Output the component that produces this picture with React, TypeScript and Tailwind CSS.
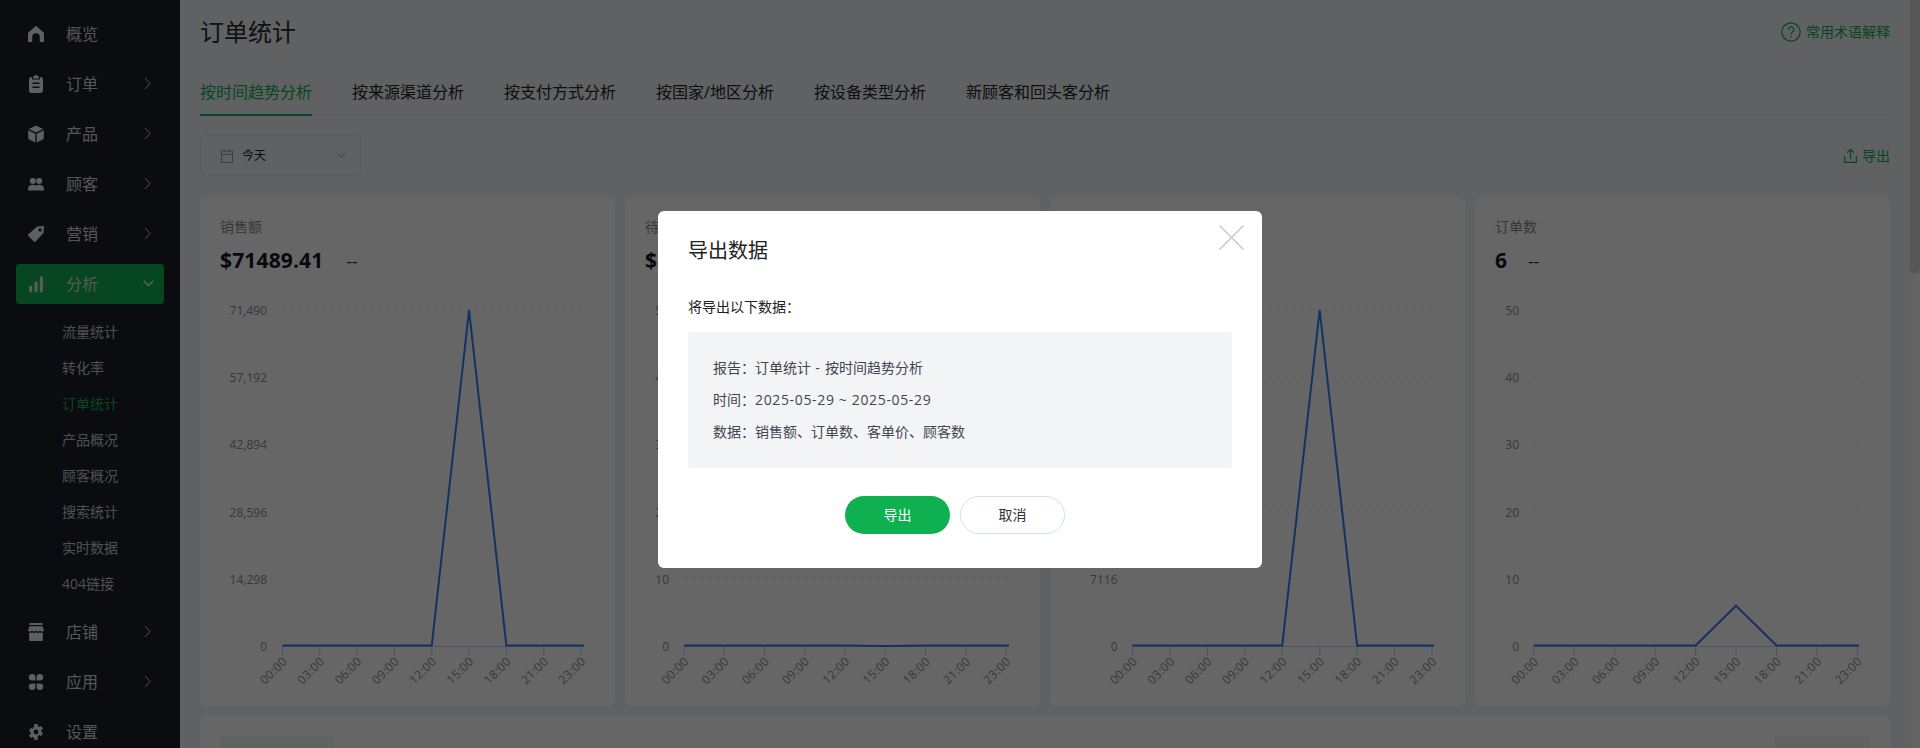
import React from "react";

const FONT = '"Open Sans","Noto Sans CJK SC",sans-serif';

const Icon = ({ children }: { children: React.ReactNode }) => (
  <svg viewBox="0 0 16 18" className="w-4 h-[18px] shrink-0" fill="currentColor">{children}</svg>
);
const icons: Record<string, React.ReactNode> = {
  home: <path d="M8 .8 15.600 7.400c.3.300.4.600.4 1v7.600c0 .6-.4 1-1 1h-3.200V12A3.800 3.800 0 0 0 4.200 12v5H1c-.6 0-1-.4-1-1V8.400c0-.4.100-.7.400-1Z" />,
  order: <path fillRule="evenodd" d="M5 1.500h1.200C6.400.6 7.100 0 8 0s1.600.6 1.800 1.500H11V3.500H5V1.500ZM3.500 2H4v2.500h8V2h.5C14 2 15 3 15 4.500V15.500C15 17 14 18 12.500 18h-9C2 18 1 17 1 15.500V4.500C1 3 2 2 3.500 2ZM4.500 7.500v1.500h7V7.500h-7ZM4.500 11.500V13h7v-1.500h-7Z" />,
  box: <g><path d="M8 .5 15.200 3.900 8 7.400.8 3.900Z" /><path d="M.2 5.200 7.300 8.700V17.500L1.200 14.500C.6 14.200.2 13.600.2 13Z" /><path d="M15.800 5.200 8.700 8.700V17.500L14.800 14.500C15.400 14.200 15.800 13.600 15.800 13Z" /></g>,
  users: <g><circle cx="4.800" cy="6" r="3" /><circle cx="11.200" cy="6" r="3" /><path d="M0 15.500v-1.800C0 11.500 2 9.800 4.800 9.800c1.300 0 2.400.4 3.200 1 .8-.6 1.900-1 3.200-1C14 9.800 16 11.500 16 13.700v1.800Z" /></g>,
  tag: <path fillRule="evenodd" d="M9.500 1.600 15 1c.6 0 1 .4 1 1l-.5 5.500c0 .4-.2.8-.5 1L7.500 16.500c-.5.5-1.200.5-1.700 0L.4 11c-.5-.5-.5-1.200 0-1.700L8.500 2c.3-.2.6-.4 1-.4ZM12 6.700a1.700 1.700 0 1 0 0-3.400 1.700 1.700 0 0 0 0 3.400Z" />,
  chart: <g><rect x="1" y="10.500" width="3.200" height="7" rx="1.600" /><rect x="6.400" y="6.500" width="3.200" height="11" rx="1.600" /><rect x="11.800" y="1" width="3.200" height="16.500" rx="1.600" /></g>,
  store: <g><rect x="1.500" y="0" width="13" height="2" /><path d="M1.500 3.200h13L16 7.400c0 .6-.9 1.200-2 1.200s-1.700-.5-2-1c-.3.5-1.100 1-2 1s-1.700-.5-2-1c-.3.500-1.100 1-2 1s-1.700-.5-2-1c-.3.500-.9 1-2 1s-2-.6-2-1.200Z" /><path d="M1.200 9.700c1 .3 2 .1 2.800-.4.700.500 1.400.600 2 .6s1.300-.1 2-.6c.7.500 1.400.6 2 .6s1.300-.1 2-.6c.8.500 1.800.7 2.800.4V17c0 .6-.4 1-1 1H2.200c-.6 0-1-.4-1-1Z" /></g>,
  apps: <g><path d="M3.500 1h.9c1.700 0 3 1.300 3 3v3.500H3.500a3.300 3.300 0 0 1 0-6.500Z" /><path d="M12.500 1h-.9c-1.700 0-3 1.300-3 3v3.500h3.900a3.300 3.300 0 0 0 0-6.500Z" /><path d="M3.500 17h.9c1.700 0 3-1.300 3-3v-3.500H3.500a3.300 3.300 0 0 0 0 6.500Z" /><path d="M12.500 17h-.9c-1.700 0-3-1.300-3-3v-3.500h3.900a3.300 3.300 0 0 1 0 6.500Z" /></g>,
  gear: <path fillRule="evenodd" d="M6.500 1h3l.5 2.200 1.300.7 2.100-.8 1.500 2.600-1.600 1.500v1.600l1.600 1.500-1.500 2.600-2.100-.8-1.300.7L9.500 17h-3L6 14.800l-1.300-.7-2.100.8L1.100 12.300l1.600-1.500V9.200L1.100 7.700l1.500-2.600 2.100.8L6 3.200ZM8 11.400a2.400 2.400 0 1 0 0-4.800 2.400 2.400 0 0 0 0 4.800Z" />,
};

const ChevronRight = () => (
  <svg width="7" height="13" viewBox="0 0 7 13" fill="none" stroke="currentColor" strokeWidth="1" className="absolute left-[144px]"><path d="M1 1l5 5.500L1 12" /></svg>
);
const ChevronDown = () => (
  <svg width="11" height="7" viewBox="0 0 11 7" fill="none" stroke="currentColor" strokeWidth="1.500" className="absolute left-[143px]"><path d="M.7.8l4.800 4.800L10.300.8" /></svg>
);

const NavItem = ({ icon, label, active }: { icon: string; label: string; active?: boolean }) => (
  <div className={`relative mx-[16px] mb-[10px] flex h-10 items-center gap-[22px] rounded-[4px] pl-[12px] text-base ${active ? "bg-[#0fb050] text-[#d6e0d8]" : "text-[#d4d7da]"}`}>
    <span className={active ? "text-[#d8e6dd]" : "text-[#e8eef2]"}><Icon>{icons[icon]}</Icon></span>
    <span>{label}</span>
  </div>
);

const NavRow = (p: { icon: string; label: string; arrow?: "right" | "down"; active?: boolean }) => (
  <div className="relative flex items-center">
    <div className="w-full"><NavItem icon={p.icon} label={p.label} active={p.active} /></div>
    {p.arrow === "right" && <span className="absolute top-[13px] left-0 text-[#c4c9ce]"><ChevronRight /></span>}
    {p.arrow === "down" && <span className="absolute top-[16px] left-0 text-[#e2e8e4]"><ChevronDown /></span>}
  </div>
);

const subs = ["流量统计", "转化率", "订单统计", "产品概况", "顾客概况", "搜索统计", "实时数据", "404链接"];

function Sidebar() {
  return (
    <aside className="w-[180px] shrink-0 bg-[#1b2028] pt-[14px]">
      <NavRow icon="home" label="概览" />
      <NavRow icon="order" label="订单" arrow="right" />
      <NavRow icon="box" label="产品" arrow="right" />
      <NavRow icon="users" label="顾客" arrow="right" />
      <NavRow icon="tag" label="营销" arrow="right" />
      <NavRow icon="chart" label="分析" arrow="down" active />
      <div className="mb-[10px]">
        {subs.map((s) => (
          <div key={s} className={`flex h-9 items-center pl-[62px] text-sm ${s === "订单统计" ? "text-[#0fb050]" : "text-[#c4c8cc]"}`}>{s}</div>
        ))}
      </div>
      <NavRow icon="store" label="店铺" arrow="right" />
      <NavRow icon="apps" label="应用" arrow="right" />
      <NavRow icon="gear" label="设置" />
    </aside>
  );
}

type ChartProps = { x0: number; x1: number; ticks: number[]; yLabels: string[]; labelRight: number; peak: number; lastX: number };

function Chart({ x0, x1, ticks, yLabels, labelRight, peak, lastX }: ChartProps) {
  const top = 13;
  const bottom = 349;
  const step = (bottom - top) / 5;
  const xl = ["00:00", "03:00", "06:00", "09:00", "12:00", "15:00", "18:00", "21:00", "23:00"];
  const py = bottom - peak * (bottom - top);
  return (
    <svg viewBox="0 0 415 409" className="mt-[22px] block h-[409px] w-full">
      {yLabels.map((l, i) => (
        <g key={l}>
          {i < 5 && <line x1={x0} x2={x1} y1={top + i * step} y2={top + i * step} stroke="#e9ebf1" strokeDasharray="4 4" />}
          <text x={labelRight} y={top + i * step + 5} textAnchor="end" fontSize="12" fill="#8b8d94" fontFamily={FONT}>{l}</text>
        </g>
      ))}
      <line x1={x0} x2={x1} y1={bottom + 0.5} y2={bottom + 0.5} stroke="#c6d0f0" />
      {ticks.map((t) => (
        <line key={t} x1={t} x2={t} y1={bottom} y2={bottom + 10} stroke="#c6d0f0" />
      ))}
      {ticks.map((t, i) => (
        <text key={t} transform={`translate(${t + 3} ${bottom + 14}) rotate(-45)`} textAnchor="end" dominantBaseline="middle" fontSize="12" letterSpacing="0.3" fill="#8b8d94" fontFamily={FONT}>{xl[i]}</text>
      ))}
      <polyline
        points={`${ticks[0]},${bottom - 0.5} ${ticks[4]},${bottom - 0.5} ${ticks[5]},${py} ${ticks[6]},${bottom - 0.5} ${lastX},${bottom - 0.5}`}
        fill="none"
        stroke="#2f7df5"
        strokeWidth="2"
      />
    </svg>
  );
}

const mkTicks = (start: number, end: number) => Array.from({ length: 9 }, (_, i) => start + (i * (end - start)) / 8);

function Card({ label, value, chart, gap, delta = true }: { label: string; value: string; chart: ChartProps; gap: string; delta?: boolean }) {
  return (
    <div className="flex-1 rounded-[6px] bg-white px-5 pt-5">
      <div className="h-5 text-sm leading-5 text-[#8a8a8a]">{label}</div>
      <div className={`mt-[10px] flex h-[28px] items-center ${gap}`}>
        <span className="text-[21px] font-bold tracking-[0.15px] text-[#111827]">{value}</span>
        {delta && <span className="text-[17px] text-[#111827]">--</span>}
      </div>
      <div className="-mx-5"><Chart {...chart} /></div>
    </div>
  );
}

const tabs = ["按时间趋势分析", "按来源渠道分析", "按支付方式分析", "按国家/地区分析", "按设备类型分析", "新顾客和回头客分析"];

function Main() {
  return (
    <main className="h-full min-w-0 flex-1 px-5">
      <header className="flex h-16 items-center justify-between">
        <h1 className="text-2xl text-[#2a2a2a]">订单统计</h1>
        <div className="flex items-center gap-[5px] text-sm text-[#0fb050]">
          <svg width="20" height="20" viewBox="0 0 20 20" fill="none" stroke="currentColor" strokeWidth="1.200">
            <circle cx="10" cy="10" r="9.200" />
            <path d="M7.300 7.800a2.800 2.800 0 1 1 4.300 2.300c-1 .7-1.600 1.200-1.600 2.600" />
            <circle cx="10" cy="15" r=".8" fill="currentColor" stroke="none" />
          </svg>
          <span>常用术语解释</span>
        </div>
      </header>
      <nav className="mt-[6px] flex h-[45px] gap-10 border-b border-[#d8dce2]">
        {tabs.map((t, i) => (
          <div key={t} className={`box-border flex h-[46px] items-center border-b-2 text-base ${i === 0 ? "border-[#0fb050] text-[#0fb050]" : "border-transparent text-[#262626]"}`}>{t}</div>
        ))}
      </nav>
      <div className="mt-5 flex items-center justify-between">
        <div className="flex h-[41px] w-[161px] items-center rounded-[4px] border border-[#dbe2ea] pl-5 pr-[14px] text-xs text-[#262626]">
          <svg width="12" height="14" viewBox="0 0 12 14" fill="none" stroke="#9aa0a6" strokeWidth="1"><rect x=".5" y="2" width="11" height="11.500" /><path d="M.5 5.500h11M3.500 .5v3M8.500 .5v3" /></svg>
          <span className="ml-[9px] flex-1">今天</span>
          <svg width="10" height="7" viewBox="0 0 10 7" fill="none" stroke="#9aa0a6" strokeWidth="1"><path d="M.8 1l4.200 4.200L9.200 1" /></svg>
        </div>
        <div className="flex items-center gap-[5px] text-sm text-[#0fb050]">
          <svg width="13" height="15" viewBox="0 0 14 16" fill="none" stroke="currentColor" strokeWidth="1.300"><path d="M7 12V1.500M3.300 5 7 1.300 10.700 5M.7 8.500v6.800h12.600V8.500" /></svg>
          <span>导出</span>
        </div>
      </div>
      <section className="mt-[21px] flex gap-[10px]">
        <Card label="销售额" value="$71489.41" gap="gap-[23px]" chart={{ x0: 82.5, x1: 384, ticks: mkTicks(82.5, 381), yLabels: ["71,490", "57,192", "42,894", "28,596", "14,298", "0"], labelRight: 67, peak: 1, lastX: 384 }} />
        <Card label="待" value="$" gap="gap-[23px]" delta={false} chart={{ x0: 59, x1: 384, ticks: mkTicks(59, 381), yLabels: ["50", "40", "30", "20", "10", "0"], labelRight: 44, peak: 0, lastX: 384 }} />
        <Card label="" value="" gap="gap-[23px]" delta={false} chart={{ x0: 82.5, x1: 384, ticks: mkTicks(82.5, 382), yLabels: ["35,580", "28,464", "21,348", "14,232", "7116", "0"], labelRight: 67.5, peak: 1, lastX: 384 }} />
        <Card label="订单数" value="6" gap="gap-[21px]" chart={{ x0: 59, x1: 384, ticks: mkTicks(58.8, 382.4), yLabels: ["50", "40", "30", "20", "10", "0"], labelRight: 44, peak: 0.12, lastX: 384 }} />
      </section>
      <section className="mt-[10px] flex h-[60px] justify-between rounded-[6px] bg-white p-5">
        <div className="h-10 w-[114px] rounded-[4px] bg-[#eef8f2]" />
        <div className="h-10 w-[95px] rounded-[4px] bg-[#f5f5f5]" />
      </section>
    </main>
  );
}

function Modal() {
  return (
    <div className="fixed inset-0 flex items-start justify-center bg-black/60">
      <div className="relative mt-[211px] h-[357px] w-[604px] rounded-[6px] bg-white px-[30px] pt-[25px]">
        <svg width="25" height="25" viewBox="0 0 25 25" fill="none" stroke="#c4c4c4" strokeWidth="1.300" className="absolute right-[18px] top-[14px]"><path d="M.5.500l24 24M24.500.500l-24 24" /></svg>
        <h2 className="h-[30px] text-xl leading-[30px] text-[#222]">导出数据</h2>
        <p className="mt-[31px] h-5 text-sm leading-5 text-[#222]">将导出以下数据：</p>
        <div className="mt-[15px] h-[136px] rounded-[4px] bg-[#f3f4f6] py-5 pl-[25px] text-sm leading-8 text-[#3f4650]">
          <div>报告：订单统计<span className="tracking-[0.7px]"> - </span>按时间趋势分析</div>
          <div>时间：<span className="tracking-[0.65px]">2025-05-29 ~ 2025-05-29</span></div>
          <div>数据：销售额、订单数、客单价、顾客数</div>
        </div>
        <div className="mt-[28px] flex justify-center text-sm">
          <div className="mr-[10px] flex h-[38px] w-[105px] items-center justify-center rounded-full bg-[#0fb050] text-white">导出</div>
          <div className="mr-[10px] flex h-[38px] w-[105px] items-center justify-center rounded-full border border-[#d3dfee] text-[#333]">取消</div>
        </div>
      </div>
    </div>
  );
}

export default function App() {
  return (
    <div className="relative flex h-[748px] w-full overflow-hidden bg-[#f0f2f5]" style={{ fontFamily: FONT }}>
      <Sidebar />
      <Main />
      <div className="h-full w-[10px] shrink-0 bg-[#f8f8f8]">
        <div className="h-[274px] rounded-b-[5px] bg-[#dadada]" />
      </div>
      <Modal />
    </div>
  );
}
